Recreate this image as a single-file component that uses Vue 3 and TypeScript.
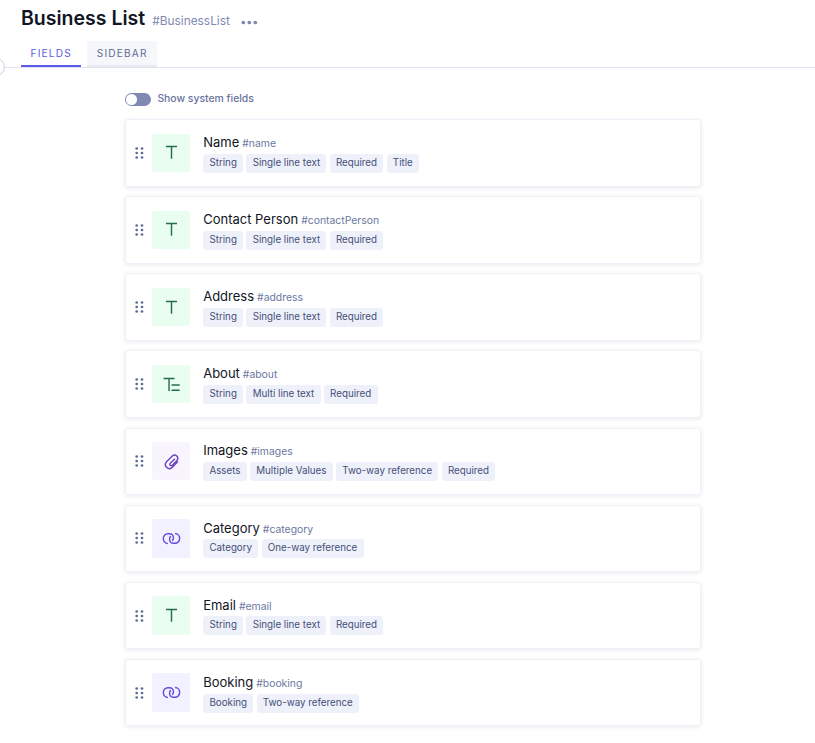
<script setup lang="ts">
type Kind = 'text' | 'multi' | 'asset' | 'link'

interface Field {
  name: string
  id: string
  kind: Kind
  tags: string[]
}

const tabs: string[] = ['Fields', 'Sidebar']
const activeTab = 'Fields'

const fields: Field[] = [
  { name: 'Name', id: 'name', kind: 'text', tags: ['String', 'Single line text', 'Required', 'Title'] },
  { name: 'Contact Person', id: 'contactPerson', kind: 'text', tags: ['String', 'Single line text', 'Required'] },
  { name: 'Address', id: 'address', kind: 'text', tags: ['String', 'Single line text', 'Required'] },
  { name: 'About', id: 'about', kind: 'multi', tags: ['String', 'Multi line text', 'Required'] },
  { name: 'Images', id: 'images', kind: 'asset', tags: ['Assets', 'Multiple Values', 'Two-way reference', 'Required'] },
  { name: 'Category', id: 'category', kind: 'link', tags: ['Category', 'One-way reference'] },
  { name: 'Email', id: 'email', kind: 'text', tags: ['String', 'Single line text', 'Required'] },
  { name: 'Booking', id: 'booking', kind: 'link', tags: ['Booking', 'Two-way reference'] },
]
</script>

<template>
  <div class="page">
    <header class="header">
      <h1 class="title">Business List</h1>
      <span class="api-id">#BusinessList</span>
      <svg class="more" viewBox="0 0 17 5" aria-hidden="true">
        <circle cx="2.3" cy="2.5" r="1.85" /><circle cx="8.3" cy="2.5" r="1.85" /><circle cx="14.3" cy="2.5" r="1.85" />
      </svg>
    </header>

    <nav class="tabs">
      <span class="collapse"></span>
      <button v-for="tab in tabs" :key="tab" class="tab" :class="{ active: tab === activeTab }">{{ tab }}</button>
    </nav>

    <main class="content">
      <label class="toggle">
        <span class="switch"><span class="knob"></span></span>
        <span class="toggle-label">Show system fields</span>
      </label>

      <ul class="list">
        <li v-for="field in fields" :key="field.id" class="card">
          <svg class="grip" viewBox="0 0 9 12" aria-hidden="true">
            <template v-for="y in [1.5, 6, 10.5]" :key="y">
              <circle cx="1.7" :cy="y" r="1.35" /><circle cx="7" :cy="y" r="1.35" />
            </template>
          </svg>
          <div class="tile" :class="field.kind">
            <svg class="icon" viewBox="0 0 20 20" aria-hidden="true">
              <path v-if="field.kind === 'text'" d="M4.2 3.6H15.8M10 3.6V16.6" />
              <path v-else-if="field.kind === 'multi'" d="M1.6 3.6H13.2M7.4 3.6V16.8M10 10.6H18.6M10 16.1H18.6" />
              <path
                v-else-if="field.kind === 'asset'"
                d="M13.6 7L8.5 12a1.5 1.5 0 0 0 2.1 2.1L15.7 9a3.4 3.4 0 0 0-4.8-4.8L4.5 10.6a4.2 4.2 0 0 0 5.9 5.9L16.8 10.1"
              />
              <path
                v-else
                d="M6.2 15.2A4.9 5.1 0 0 1 6.4 5H8A4 4 0 0 1 12 9V9.6C12 10.8 11.5 11.8 10.7 12.5M13.8 4.8A4.9 5.1 0 0 1 13.6 15H12A4 4 0 0 1 8 11V10.4C8 9.2 8.5 8.2 9.3 7.5"
              />
            </svg>
          </div>
          <div class="info">
            <div class="heading">
              <span class="name">{{ field.name }}</span>
              <span class="field-id">#{{ field.id }}</span>
            </div>
            <div class="tags">
              <span v-for="tag in field.tags" :key="tag" class="tag">{{ tag }}</span>
            </div>
          </div>
        </li>
      </ul>
    </main>
  </div>
</template>

<style>
body {
  background: #fff;
}
</style>

<style scoped>
.page {
  box-sizing: border-box;
  height: 743px;
  overflow: hidden;
  font-family: Inter, 'Liberation Sans', sans-serif;
  color: #111524;
}

.header {
  display: flex;
  align-items: center;
  height: 41px;
  padding-left: 21px;
  box-sizing: border-box;
  padding-bottom: 5px;
}

.title {
  margin: 0;
  font-size: 19.5px;
  font-weight: 600;
  line-height: 24px;
}

.api-id {
  margin: 5px 0 0 7px;
  font-size: 11.9px;
  color: #7f89b3;
}

.more {
  width: 17px;
  height: 5px;
  margin: 8px 0 0 11px;
  fill: #7f89b3;
}

.tabs {
  position: relative;
  display: flex;
  gap: 6px;
  height: 26px;
  padding-left: 21px;
  border-bottom: 1px solid #e1e4f0;
}

.collapse {
  position: absolute;
  left: -13px;
  top: 17px;
  width: 16px;
  height: 16px;
  border: 1px solid #c9cee2;
  border-radius: 50%;
  background: #fff;
}

.tab {
  box-sizing: border-box;
  height: 26px;
  padding: 0 9.5px;
  border: 0;
  border-bottom: 2px solid #e9ebf4;
  border-radius: 3px 3px 0 0;
  background: #f6f7fb;
  color: #5f6b95;
  font: 400 10.1px/24px Inter, 'Liberation Sans', sans-serif;
  letter-spacing: 1.18px;
  text-transform: uppercase;
}

.tab.active {
  background: none;
  border-bottom-color: #5b5be5;
  color: #5b5be5;
}

.content {
  width: 576px;
  margin-left: 125px;
  padding-top: 25px;
}

.toggle {
  display: flex;
  align-items: center;
  gap: 6.4px;
  height: 13px;
}

.switch {
  display: flex;
  align-items: center;
  box-sizing: border-box;
  width: 26px;
  height: 13px;
  padding: 0 1px;
  border-radius: 7px;
  background: #7f89b3;
}

.knob {
  width: 10.5px;
  height: 10.5px;
  border-radius: 50%;
  background: #fff;
}

.toggle-label {
  margin-top: -2px;
  font-size: 10.4px;
  font-weight: 500;
  line-height: 13px;
  color: #68749e;
}

.list {
  display: flex;
  flex-direction: column;
  gap: 9.6px;
  margin: 0;
  padding: 13.1px 0 0;
  list-style: none;
}

.card {
  display: flex;
  align-items: center;
  box-sizing: border-box;
  height: 67.52px;
  padding-left: 8.6px;
  border: 1px solid #eef0fa;
  border-radius: 3px;
  box-shadow: 0 1px 4px rgba(30, 35, 60, 0.1);
}

.grip {
  width: 9px;
  height: 12px;
  fill: #5d6993;
}

.tile {
  display: grid;
  place-items: center;
  width: 38.4px;
  height: 38.4px;
  margin-left: 8.4px;
  border-radius: 2px;
}

.tile.text,
.tile.multi {
  background: #e9fdf0;
  color: #276b51;
}

.tile.asset {
  background: #f9f5ff;
  color: #6b46c1;
}

.tile.link {
  background: #f1f1ff;
  color: #654ae0;
}

.icon {
  width: 19px;
  height: 19px;
  fill: none;
  stroke: currentColor;
  stroke-width: 1.5;
}

.info {
  margin-left: 12.8px;
}

.heading {
  display: flex;
  align-items: baseline;
  gap: 3px;
  height: 20.8px;
  line-height: 19.6px;
}

.name {
  font-size: 13px;
}

.field-id {
  font-size: 10.4px;
  color: #6b779f;
}

.tags {
  display: flex;
  gap: 3.2px;
}

.tag {
  height: 19px;
  padding: 0 6.3px;
  border-radius: 3px;
  background: #eef1fa;
  color: #454f78;
  font-size: 9.78px;
  font-weight: 400;
  line-height: 17.6px;
}
</style>
